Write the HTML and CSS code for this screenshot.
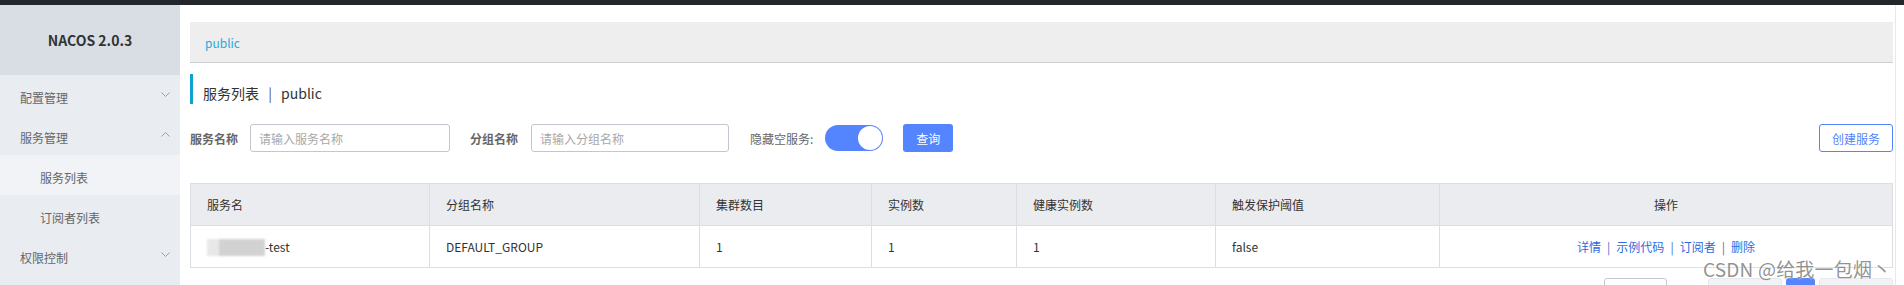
FILE: index.html
```html
<!DOCTYPE html>
<html lang="zh-CN">
<head>
<meta charset="utf-8">
<title>NACOS 2.0.3</title>
<link rel="stylesheet" href="styles.css">
</head>
<body>
<div class="topbar"></div>
<div class="layout">
  <aside class="sidebar">
    <div class="brand">NACOS 2.0.3</div>
    <ul class="menu">
      <li class="menu-item"><span>配置管理</span><svg class="chev" width="9" height="5" viewBox="0 0 9 5"><path d="M0.5 0.5 L4.5 4.5 L8.5 0.5" fill="none" stroke="#9a9ea6" stroke-width="1"/></svg></li>
      <li class="menu-item"><span>服务管理</span><svg class="chev" width="9" height="5" viewBox="0 0 9 5"><path d="M0.5 4.5 L4.5 0.5 L8.5 4.5" fill="none" stroke="#9a9ea6" stroke-width="1"/></svg></li>
      <li class="menu-item sub active"><span>服务列表</span></li>
      <li class="menu-item sub"><span>订阅者列表</span></li>
      <li class="menu-item"><span>权限控制</span><svg class="chev" width="9" height="5" viewBox="0 0 9 5"><path d="M0.5 0.5 L4.5 4.5 L8.5 0.5" fill="none" stroke="#9a9ea6" stroke-width="1"/></svg></li>
    </ul>
  </aside>
  <main class="main">
    <div class="breadcrumb"><span class="crumb">public</span></div>
    <div class="page-title">服务列表 <span class="sep">|</span> public</div>
    <div class="filters">
      <label class="label">服务名称</label>
      <input class="input w200" type="text" placeholder="请输入服务名称">
      <label class="label ml20">分组名称</label>
      <input class="input w198" type="text" placeholder="请输入分组名称">
      <span class="label-plain">隐藏空服务:</span>
      <span class="switch"><span class="knob"></span></span>
      <button class="btn-primary">查询</button>
      <button class="btn-outline">创建服务</button>
    </div>
    <table class="grid">
      <colgroup>
        <col style="width:239px"><col style="width:270px"><col style="width:172px"><col style="width:145px"><col style="width:199px"><col style="width:224px"><col>
      </colgroup>
      <thead>
        <tr><th>服务名</th><th>分组名称</th><th>集群数目</th><th>实例数</th><th>健康实例数</th><th>触发保护阈值</th><th class="center">操作</th></tr>
      </thead>
      <tbody>
        <tr>
          <td><span class="blur"></span>-test</td>
          <td>DEFAULT_GROUP</td>
          <td>1</td>
          <td>1</td>
          <td>1</td>
          <td>false</td>
          <td class="center actions"><a>详情</a><span class="bar">|</span><a>示例代码</a><span class="bar">|</span><a>订阅者</a><span class="bar">|</span><a>删除</a></td>
        </tr>
      </tbody>
    </table>
    <div class="pager">
      <span class="pg-size"></span>
      <span class="pg-btn"></span>
      <span class="pg-cur"></span>
      <span class="pg-btn"></span>
    </div>
    <div class="watermark">CSDN @给我一包烟丶</div>
  </main>
</div>
</body>
</html>
```

FILE: styles.css
```css
* { box-sizing: border-box; }
html, body { margin: 0; padding: 0; background: #fff; }
body {
  font-family: "Noto Sans CJK SC", "Noto Sans", sans-serif;
  font-size: 12px;
  color: #333;
  width: 1904px;
  height: 285px;
  overflow: hidden;
}
.topbar { height: 5px; background: #23272b; }
.layout { display: flex; height: 280px; overflow: hidden; }

.sidebar { width: 180px; flex: none; background: #e9ecf0; }
.brand {
  height: 70px;
  background: #d9dde4;
  display: flex;
  align-items: center;
  justify-content: center;
  font-size: 14px;
  font-weight: 700;
  color: #333;
}
.menu { list-style: none; margin: 0; padding: 0; }
.menu-item {
  height: 40px;
  display: flex;
  align-items: center;
  justify-content: space-between;
  padding: 4px 10px 0 20px;
  color: #666;
  font-size: 12px;
}
.menu-item.sub { padding-left: 40px; }
.menu-item.active { background: #f1f3f6; }
.chev { margin-top: -6px; }

.main {
  width: 1716px;
  flex: none;
  position: relative;
  padding: 17px 2px 0 10px;
  border-right: 1px solid #e8e8e8;
}
.breadcrumb {
  height: 41px;
  background: #eeeeee;
  border-bottom: 1px solid #cfcfcf;
  padding-left: 15px;
  display: flex;
  align-items: center;
}
.crumb { color: #2aa8dc; font-size: 12px; }

.page-title {
  margin-top: 11px;
  height: 30px;
  border-left: 3px solid #0fa0d6;
  padding: 8px 0 0 10px;
  line-height: 22px;
  font-size: 14px;
  color: #333;
}
.page-title .sep { margin: 0 6px; color: #555; }

.filters {
  margin-top: 20px;
  height: 28px;
  display: flex;
  align-items: center;
}
.label { font-weight: 700; color: #666; font-size: 12px; margin-right: 12px; }
.ml20 { margin-left: 20px; margin-right: 13px; }
.label-plain { color: #666; font-size: 12px; margin-left: 21px; margin-right: 12px; }
.input {
  height: 28px;
  border: 1px solid #c4c6cf;
  border-radius: 3px;
  padding: 0 8px;
  font-family: inherit;
  font-size: 12px;
  color: #333;
  outline: none;
}
.input::placeholder { color: #a8a8a8; }
.w200 { width: 200px; }
.w198 { width: 198px; }
.switch {
  width: 58px;
  height: 26px;
  border-radius: 13px;
  background: #5584ff;
  display: flex;
  align-items: center;
  justify-content: flex-end;
  padding-right: 1px;
}
.knob {
  width: 24px;
  height: 24px;
  border-radius: 50%;
  background: #fff;
}
.btn-primary {
  margin-left: 20px;
  width: 50px;
  height: 28px;
  border: none;
  border-radius: 3px;
  background: #5584ff;
  color: #fff;
  font-family: inherit;
  font-size: 12px;
  padding: 0;
}
.btn-outline {
  margin-left: auto;
  width: 74px;
  height: 28px;
  border: 1px solid #5584ff;
  border-radius: 3px;
  background: #fff;
  color: #5584ff;
  font-family: inherit;
  font-size: 12px;
  padding: 0;
}

.grid {
  margin-top: 31px;
  width: 1703px;
  border-collapse: collapse;
  table-layout: fixed;
}
.grid th, .grid td {
  border: 1px solid #dcdee3;
  height: 42px;
  padding: 0 16px;
  text-align: left;
  font-weight: 400;
  font-size: 12px;
  color: #333;
  white-space: nowrap;
}
.grid th { background: #ebecf0; }
.grid .center { text-align: center; }
.actions a { color: #2f6be0; }
.actions .bar { color: #4a6fc0; margin: 0 6px; }
.blur {
  display: inline-block;
  width: 58px;
  height: 17px;
  vertical-align: -4px;
  background: linear-gradient(90deg, #e8e8e8 0 20%, #d2d2d2 20% 100%);
  filter: blur(1px);
}

.pager {
  margin-top: 10px;
  display: flex;
  justify-content: flex-end;
  gap: 4px;
}
.pg-size {
  width: 63px; height: 28px;
  border: 1px solid #c4c6cf; border-radius: 3px; background: #fff;
  margin-right: 37px;
}
.pg-btn {
  width: 74px; height: 28px;
  border: 1px solid #e6e7eb; border-radius: 3px; background: #f2f3f7;
}
.pg-cur {
  width: 29px; height: 28px;
  border-radius: 3px; background: #5584ff;
}

.watermark {
  position: absolute;
  left: 1523px;
  top: 250px;
  font-size: 19px;
  color: rgba(110, 110, 110, 0.75);
  text-shadow: 0 0 2px #fff;
  white-space: nowrap;
  letter-spacing: 0.2px;
}
```
